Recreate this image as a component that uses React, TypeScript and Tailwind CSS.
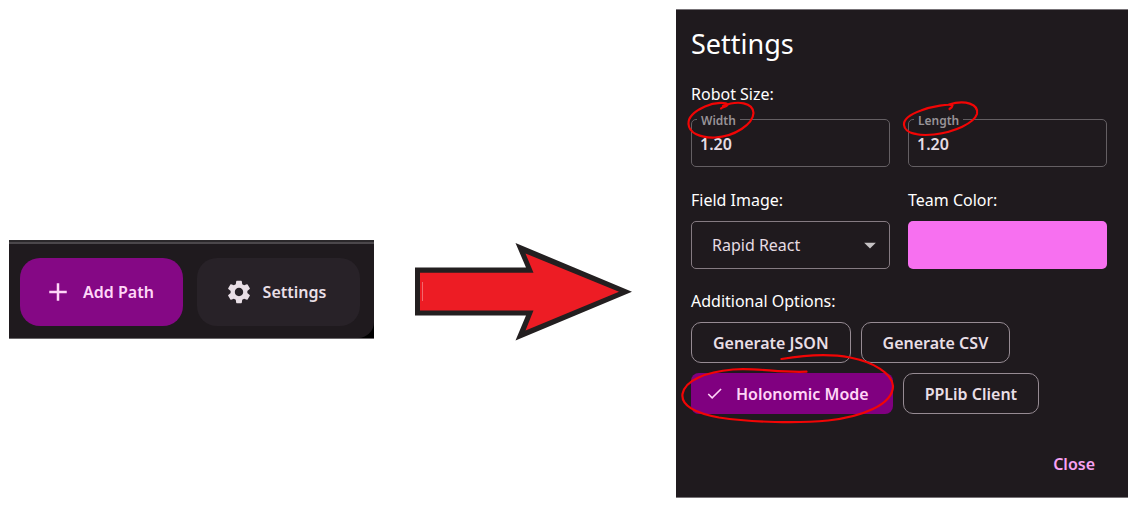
import { useState, type ReactNode } from "react";
import {
  MdAdd,
  MdArrowDropDown,
  MdCheck,
  MdSettings,
} from "react-icons/md";

function Toolbar() {
  return (
    <section className="mt-[231px] overflow-hidden border-b border-[#6b686b] bg-black">
      <div className="rounded-br-2xl border-t-2 border-[#2b282b] bg-[#1f1a1e]">
        <div className="h-0.5 bg-[#4b474b]" />
        <div className="flex gap-3.5 pt-3.5 pr-3.5 pb-3 pl-[11px]">
          <button
            type="button"
            className="flex h-17 flex-1 items-center justify-center gap-2.5 rounded-[20px] bg-[#850885] pr-1.5 text-base font-semibold text-[#ffd6f7]"
          >
            <MdAdd size={30} />
            Add Path
          </button>
          <button
            type="button"
            className="flex h-17 flex-1 items-center justify-center gap-2.5 rounded-[20px] bg-[#282228] pr-1.5 text-base font-semibold text-[#e9dfe6]"
          >
            <MdSettings size={28} />
            Settings
          </button>
        </div>
      </div>
    </section>
  );
}

function Arrow() {
  return (
    <svg
      viewBox="415 243 217 98"
      className="mt-[234px] h-auto w-full"
      aria-hidden="true"
    >
      <path
        d="M415 267.5H526L515.5 243L632 291.7L515.5 340.5L526 315.5H415Z"
        fill="#231f20"
      />
      <path
        d="M420 272.7H533.5L525.5 253.5L619 291.7L525.5 330.5L533.5 310.5H420Z"
        fill="#ed1c24"
      />
      <path d="M422.5 282V301" stroke="#f47c80" strokeWidth="0.8" />
    </svg>
  );
}

function SizeField({
  id,
  label,
  children,
}: {
  id: string;
  label: string;
  children: ReactNode;
}) {
  return (
    <div className="relative h-12 rounded-[5px] border border-[#645f63]">
      <label
        htmlFor={id}
        className="absolute -top-[7px] left-[5px] bg-[#1f1a1e] px-1 text-xs leading-4 font-semibold text-[#989397]"
      >
        {label}
      </label>
      <input
        id={id}
        type="text"
        defaultValue="1.20"
        className="h-full w-full bg-transparent pt-0.5 pl-2 text-base font-semibold text-[#e6dce3] outline-none"
      />
      {children}
    </div>
  );
}

function OptionChip({
  label,
  selected,
  onToggle,
}: {
  label: string;
  selected: boolean;
  onToggle: () => void;
}) {
  return (
    <button
      type="button"
      aria-pressed={selected}
      onClick={onToggle}
      className={
        selected
          ? "flex h-[41px] items-center gap-3 rounded-lg bg-[#800080] pr-6 pl-3.5 text-base font-semibold text-[#ffd6f7]"
          : "flex h-[41px] items-center rounded-[10px] border border-[#968b93] px-[21px] text-base font-semibold text-[#e9dfe6]"
      }
    >
      {selected && <MdCheck size={19} />}
      {label}
    </button>
  );
}

const markClass = "pointer-events-none absolute overflow-visible";

function SettingsDialog() {
  const [options, setOptions] = useState([
    { label: "Generate JSON", selected: false },
    { label: "Generate CSV", selected: false },
    { label: "Holonomic Mode", selected: true },
    { label: "PPLib Client", selected: false },
  ]);
  const toggle = (label: string) =>
    setOptions((current) =>
      current.map((o) =>
        o.label === label ? { ...o, selected: !o.selected } : o,
      ),
    );

  return (
    <section
      aria-labelledby="settings-title"
      className="border-y border-[#777377] bg-[#1f1a1e] pt-4 pr-[21px] pb-[15px] pl-[15px] text-white"
    >
      <h1 id="settings-title" className="text-[27px] leading-9">
        Settings
      </h1>

      <h2 className="mt-5 text-base leading-6">Robot Size:</h2>
      <div className="mt-[13px] grid grid-cols-2 gap-[18px]">
        <SizeField id="robot-width" label="Width">
          <svg
            viewBox="687 101 68 38"
            width="68"
            height="38"
            className={`${markClass} -top-[19px] -left-[5px]`}
            fill="none"
            stroke="#f20505"
            strokeWidth="2.2"
            strokeLinecap="round"
            aria-hidden="true"
          >
            <path d="M721 108.5C723 106.5 726 107.5 727.5 105C728 102 715 102 705 106.5C695 111 688 117 688.5 124C689 133 700 138 715 137.5C735 136.5 753 124 753.5 113C753 102.5 738 100 723 106" />
          </svg>
        </SizeField>
        <SizeField id="robot-length" label="Length">
          <svg
            viewBox="903 101 76 36"
            width="76"
            height="36"
            className={`${markClass} -top-[19px] -left-[6px]`}
            fill="none"
            stroke="#f20505"
            strokeWidth="2.2"
            strokeLinecap="round"
            aria-hidden="true"
          >
            <path d="M949.5 109C951 108 952.5 107 952.5 105.5C950 103.5 932 106 921 110.5C911 114 903.5 119 904 125C905 134 920 136 934 134.5C955 132 974 123 977 114C979 104 965 99.5 949 104.5" />
          </svg>
        </SizeField>
      </div>

      <div className="mt-[21px] grid grid-cols-2 gap-x-[18px]">
        <div>
          <label htmlFor="field-image" className="text-base leading-6">
            Field Image:
          </label>
          <div className="relative mt-[9px]">
            <select
              id="field-image"
              className="block h-12 w-full appearance-none rounded-[5px] border border-[#857b82] bg-transparent pl-5 text-base text-[#e6dce3] outline-none"
            >
              <option>Rapid React</option>
            </select>
            <MdArrowDropDown
              size={28}
              className="pointer-events-none absolute top-2.5 right-1.5 text-[#c5c2c4]"
            />
          </div>
        </div>
        <div>
          <label htmlFor="team-color" className="text-base leading-6">
            Team Color:
          </label>
          <input
            id="team-color"
            type="color"
            defaultValue="#f770f0"
            className="mt-[9px] block h-12 w-full appearance-none overflow-hidden rounded-[5px] border-0 bg-transparent p-0 [&::-webkit-color-swatch]:border-0 [&::-webkit-color-swatch-wrapper]:p-0"
          />
        </div>
      </div>

      <h2 className="mt-5 text-base leading-6">Additional Options:</h2>
      <div className="relative mt-[9px] flex flex-wrap gap-2.5">
        {options.map((o) => (
          <OptionChip
            key={o.label}
            label={o.label}
            selected={o.selected}
            onToggle={() => toggle(o.label)}
          />
        ))}
        <svg
          viewBox="681 354 214 70"
          width="214"
          height="70"
          className={`${markClass} top-8 -left-2.5`}
          fill="none"
          stroke="#f20505"
          strokeWidth="2.2"
          strokeLinecap="round"
          aria-hidden="true"
        >
          <path d="M781.5 359C805 355 830 353.5 850 357.5C873 362 892 373 893 386C893 405 861 417 828 420.5C798 423.5 753 422.5 719 417.5C695 413 681 405 682.5 394C685 380 706 372 733 369.5C757 367.5 779 373 806.5 371.7" />
        </svg>
      </div>

      <div className="mt-8 flex justify-end pr-3">
        <button
          type="button"
          className="h-9 text-base font-semibold text-[#f7a1f2]"
        >
          Close
        </button>
      </div>
    </section>
  );
}

export default function App() {
  return (
    <main className="grid min-h-screen grid-cols-[365fr_302fr_452fr] items-start bg-white pt-[9px] pr-[7px] pb-2 pl-[9px] font-['Noto_Sans','Open_Sans',sans-serif]">
      <Toolbar />
      <div className="pr-11 pl-[41px]">
        <Arrow />
      </div>
      <SettingsDialog />
    </main>
  );
}
